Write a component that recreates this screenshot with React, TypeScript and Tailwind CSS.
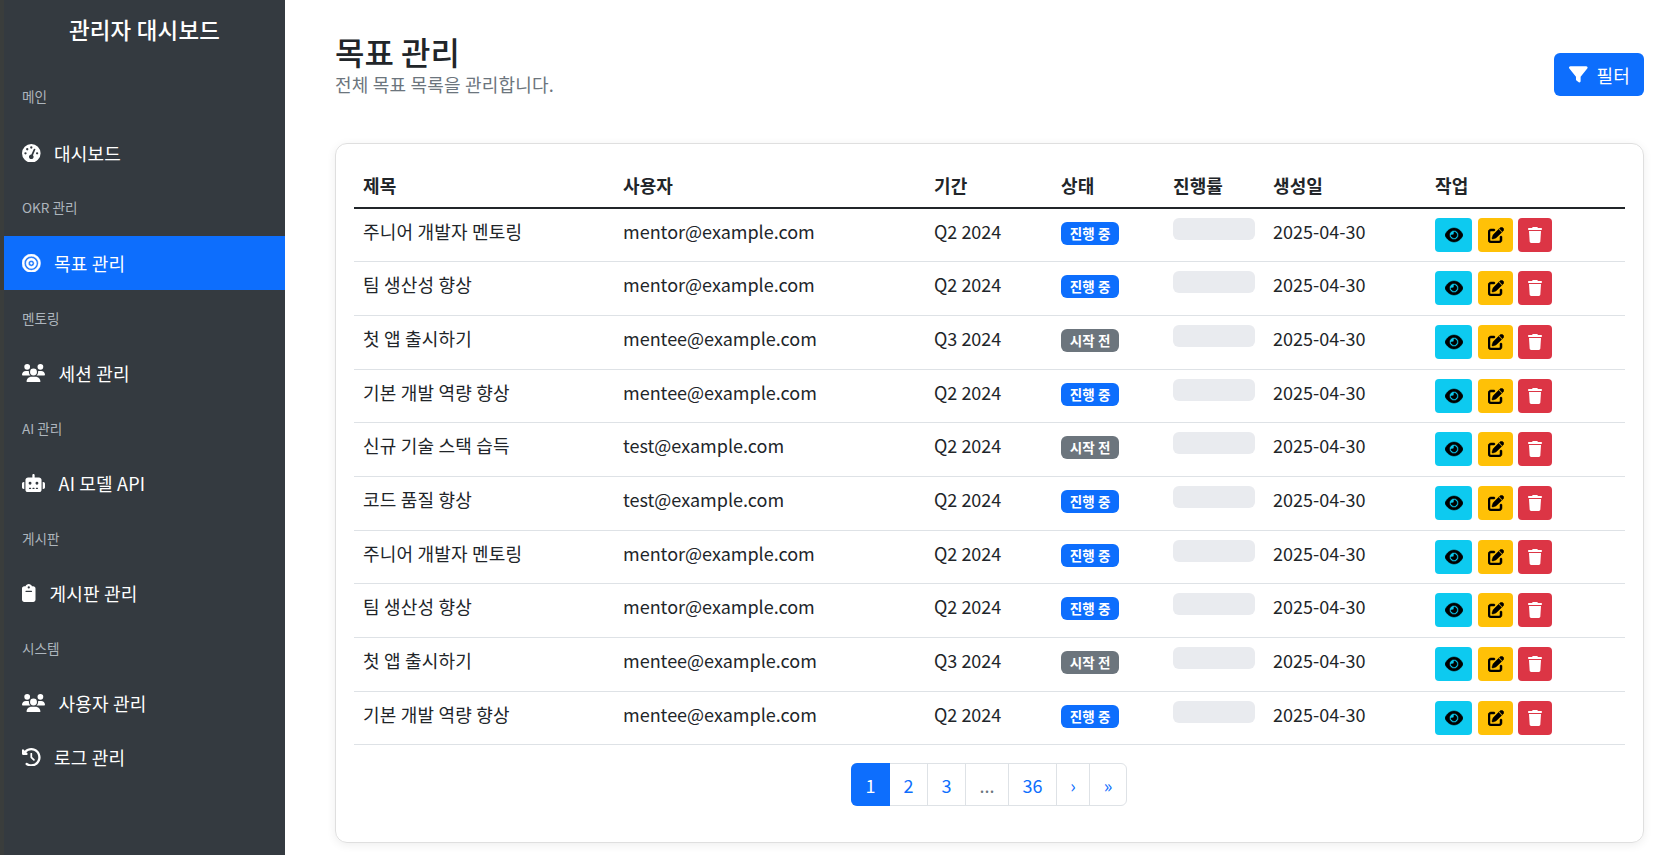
import { FaGaugeHigh, FaBullseye, FaUsers, FaRobot, FaClipboard, FaClockRotateLeft, FaFilter, FaEye, FaPenToSquare, FaTrash } from 'react-icons/fa6';

const font = { fontFamily: '"Noto Sans CJK KR", "Noto Sans", sans-serif' };

const goals = [
  ['주니어 개발자 멘토링', 'mentor@example.com', 'Q2 2024', '진행 중'],
  ['팀 생산성 향상', 'mentor@example.com', 'Q2 2024', '진행 중'],
  ['첫 앱 출시하기', 'mentee@example.com', 'Q3 2024', '시작 전'],
  ['기본 개발 역량 향상', 'mentee@example.com', 'Q2 2024', '진행 중'],
  ['신규 기술 스택 습득', 'test@example.com', 'Q2 2024', '시작 전'],
  ['코드 품질 향상', 'test@example.com', 'Q2 2024', '진행 중'],
  ['주니어 개발자 멘토링', 'mentor@example.com', 'Q2 2024', '진행 중'],
  ['팀 생산성 향상', 'mentor@example.com', 'Q2 2024', '진행 중'],
  ['첫 앱 출시하기', 'mentee@example.com', 'Q3 2024', '시작 전'],
  ['기본 개발 역량 향상', 'mentee@example.com', 'Q2 2024', '진행 중'],
];

function NavHeading({ children, className = '' }: { children: React.ReactNode; className?: string }) {
  return <div className={`flex h-[56px] items-center px-[18px] text-[13.6px] text-[#adb5bd] ${className}`}>{children}</div>;
}

function NavItem({ icon, label, active }: { icon: React.ReactNode; label: string; active?: boolean }) {
  return (
    <div className={`flex h-[54px] items-center pl-[18px] text-lg tracking-[0.2px] text-white ${active ? 'bg-[#0d6efd]' : ''}`}>
      {icon}
      <span>{label}</span>
    </div>
  );
}

export default function App() {
  return (
    <div className="flex min-h-[855px] bg-white text-[#212529]" style={font}>
      <aside className="w-[285px] shrink-0 border-l-4 border-[#3a3d3c] bg-[#343a40]">
        <h1 className="h-[70px] pt-[15px] text-center text-[22.4px] leading-[28px] font-medium tracking-[0.25px] text-white">관리자 대시보드</h1>
        <NavHeading className="pb-[3px]">메인</NavHeading>
        <NavItem icon={<FaGaugeHigh className="mr-[13.4px] size-[18.6px]" />} label="대시보드" />
        <NavHeading className="pb-[2px]">OKR 관리</NavHeading>
        <NavItem active icon={<FaBullseye className="mr-[13.4px] size-[18.6px] stroke-[12]" />} label="목표 관리" />
        <NavHeading>멘토링</NavHeading>
        <NavItem icon={<FaUsers className="mr-[13.5px] h-[18.4px] w-[23px]" />} label="세션 관리" />
        <NavHeading>AI 관리</NavHeading>
        <NavItem icon={<FaRobot className="mr-[13.5px] h-[18.4px] w-[23px]" />} label="AI 모델 API" />
        <NavHeading>게시판</NavHeading>
        <NavItem icon={<FaClipboard className="mr-[14px] h-[18px] w-[13.5px]" />} label="게시판 관리" />
        <NavHeading>시스템</NavHeading>
        <NavItem icon={<FaUsers className="mr-[13.5px] h-[18.4px] w-[23px]" />} label="사용자 관리" />
        <NavItem icon={<FaClockRotateLeft className="mr-[13.4px] size-[18.6px]" />} label="로그 관리" />
      </aside>

      <main className="flex-1 pl-[50px] pr-[22px] pt-8">
        <header className="mb-[45px] flex items-start justify-between">
          <div>
            <h2 className="mb-px text-[32px] leading-[38px] font-medium">목표 관리</h2>
            <p className="text-lg leading-[27px] tracking-[0.2px] text-[#6c757d]">전체 목표 목록을 관리합니다.</p>
          </div>
          <button className="mt-[21px] flex h-[43px] w-[90px] items-center gap-[9px] rounded-md bg-[#0d6efd] pl-[15px] text-lg tracking-[0.2px] text-white">
            <FaFilter className="size-[18.6px]" />
            필터
          </button>
        </header>

        <section className="rounded-xl border border-[#dfdfdf] px-[18px] pt-[18px] pb-9 shadow-[0_2px_10px_rgba(0,0,0,0.07)]">
          <table className="w-full table-fixed border-collapse text-left text-lg">
            <thead>
              <tr className="h-[46px] border-b-2 border-[#212529] tracking-[0.1px]">
                <th className="w-[260px] pl-[9px] font-bold">제목</th>
                <th className="w-[311px] pl-[9px] font-bold">사용자</th>
                <th className="w-[128px] pl-[9px] font-bold">기간</th>
                <th className="w-[112px] pl-2 font-bold">상태</th>
                <th className="w-[100px] pl-2 font-bold">진행률</th>
                <th className="w-[162px] pl-2 font-bold">생성일</th>
                <th className="pl-2 font-bold">작업</th>
              </tr>
            </thead>
            <tbody>
              {goals.map((g, i) => (
                <tr key={i} className="h-[53.68px] border-b border-[#dee2e6]">
                  <td className="pl-[9px] pt-2 align-top tracking-[0.2px]">{g[0]}</td>
                  <td className="pl-[9px] pt-2 align-top">{g[1]}</td>
                  <td className="pl-[9px] pt-2 align-top">{g[2]}</td>
                  <td className="pl-2 pt-2 align-top">
                    <span className={`inline-block rounded-md px-[8.775px] text-[13.5px] leading-[23px] font-bold tracking-[0.1px] text-white ${g[3] === '진행 중' ? 'bg-[#0d6efd]' : 'bg-[#6c757d]'}`}>{g[3]}</span>
                  </td>
                  <td className="pl-2 pt-[9px] align-top">
                    <div className="h-[22px] w-[82px] rounded-md bg-[#e9ebef]" />
                  </td>
                  <td className="pl-2 pt-2 align-top">2025-04-30</td>
                  <td className="pl-2 pt-[9px] align-top">
                    <div className="flex">
                      <button className="mr-[6px] flex h-[34px] w-[37px] items-center justify-center rounded bg-[#0dcaf0] text-black"><FaEye className="size-[18px] stroke-[16]" /></button>
                      <button className="mr-[5px] flex h-[34px] w-[35px] items-center justify-center rounded bg-[#ffc107] text-black"><FaPenToSquare className="size-[16px] stroke-[16]" /></button>
                      <button className="flex h-[34px] w-[34px] items-center justify-center rounded bg-[#dc3545] text-white"><FaTrash className="size-[16px]" /></button>
                    </div>
                  </td>
                </tr>
              ))}
            </tbody>
          </table>
          <nav className="mt-[18px] flex justify-center pr-px">
            <div className="flex h-[43px] rounded-md border border-[#dee2e6] text-lg text-[#0d6efd]">
              <a className="-my-px -ml-px flex w-[39px] items-center justify-center rounded-l-md bg-[#0d6efd] text-white">1</a>
              <a className="flex w-[38px] items-center justify-center border-r border-[#dee2e6]">2</a>
              <a className="flex w-[38px] items-center justify-center border-r border-[#dee2e6]">3</a>
              <a className="flex w-[43px] items-center justify-center border-r border-[#dee2e6] text-[#6c757d]">...</a>
              <a className="flex w-[48px] items-center justify-center border-r border-[#dee2e6]">36</a>
              <a className="flex w-[33px] items-center justify-center border-r border-[#dee2e6]">›</a>
              <a className="flex w-[36px] items-center justify-center">»</a>
            </div>
          </nav>
        </section>
      </main>
    </div>
  );
}
